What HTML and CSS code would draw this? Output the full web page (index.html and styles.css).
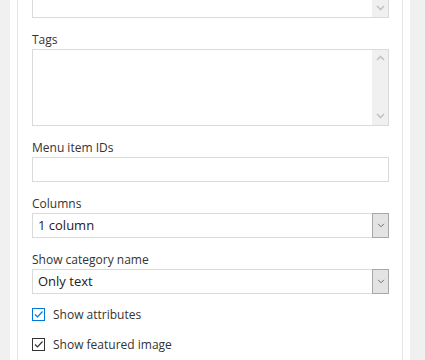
FILE: index.html
```html
<!DOCTYPE html>
<html lang="en">
<head>
    <meta charset="UTF-8">
    <meta name="viewport" content="width=device-width, initial-scale=1.0">
    <title>Widget settings</title>
    <link rel="stylesheet" href="styles.css">
</head>
<body>
    <div class="panel">
        <div class="inner">
            <div class="area area-top">
                <div class="area-text"></div>
                <div class="scrollbar">
                    <svg class="arrow" viewBox="0 0 9 6"><path d="M1 1l3.5 3.5L8 1"/></svg>
                </div>
            </div>

            <div class="field">
                <label class="label">Tags</label>
                <div class="area area-tags">
                    <div class="area-text"></div>
                    <div class="scrollbar">
                        <svg class="arrow" viewBox="0 0 9 6"><path d="M1 5l3.5-3.5L8 5"/></svg>
                        <svg class="arrow" viewBox="0 0 9 6"><path d="M1 1l3.5 3.5L8 1"/></svg>
                    </div>
                </div>
            </div>

            <div class="field">
                <label class="label">Menu item IDs</label>
                <input class="text-input" type="text">
            </div>

            <div class="field">
                <label class="label">Columns</label>
                <div class="select">
                    <span class="select-value">1 column</span>
                    <span class="select-btn"><svg viewBox="0 0 9 6"><path d="M1 1l3.5 3.5L8 1"/></svg></span>
                </div>
            </div>

            <div class="field">
                <label class="label">Show category name</label>
                <div class="select">
                    <span class="select-value">Only text</span>
                    <span class="select-btn"><svg viewBox="0 0 9 6"><path d="M1 1l3.5 3.5L8 1"/></svg></span>
                </div>
            </div>

            <div class="checks">
                <label class="check">
                    <span class="box box-focus"><svg viewBox="0 0 11 11"><path d="M2 5.5l2.5 2.5L9.5 2.5"/></svg></span>
                    Show attributes
                </label>
                <label class="check">
                    <span class="box"><svg viewBox="0 0 11 11"><path d="M2 5.5l2.5 2.5L9.5 2.5"/></svg></span>
                    Show featured image
                </label>
            </div>
        </div>
    </div>
</body>
</html>
```

FILE: styles.css
```css
body {
    font-family: 'Open Sans', 'Noto Sans', sans-serif;
    color: #333;
    background-color: #f0f0f0;
    margin: 0;
    padding: 0;
    overflow: hidden;
}
.panel {
    width: 386px;
    margin-left: 10px;
    padding: 0 7px;
    background-color: #fff;
    height: 360px;
}
.inner {
    display: flow-root;
    border-left: 1px solid #e5e5e5;
    border-right: 1px solid #e5e5e5;
    padding: 0 13px 0 14px;
    height: 100%;
}
.field {
    margin-top: 13px;
}
.label {
    display: block;
    font-size: 12px;
    line-height: 18px;
    height: 18px;
}
.area {
    display: flex;
    border: 1px solid #dadada;
    background-color: #fff;
}
.area-top {
    height: 28px;
    margin-top: -12px;
}
.area-tags {
    height: 75px;
}
.area-text {
    flex: 1;
}
.scrollbar {
    width: 16px;
    background-color: #f0f0f0;
    display: flex;
    flex-direction: column;
    justify-content: space-between;
    align-items: center;
    padding: 5px 0 6px;
}
.area-top .scrollbar {
    justify-content: flex-end;
}
.arrow {
    width: 9px;
    height: 6px;
}
.arrow path {
    fill: none;
    stroke: #c2c2c2;
    stroke-width: 1.6;
}
.text-input {
    display: block;
    box-sizing: border-box;
    width: 100%;
    height: 25px;
    margin: 0;
    border: 1px solid #dadada;
    padding: 0 5px;
    font: inherit;
}
.select {
    display: flex;
    height: 25px;
    box-sizing: border-box;
    border: 1px solid #dadada;
}
.select-value {
    flex: 1;
    font-size: 13px;
    line-height: 23px;
    padding-left: 5px;
    color: #222;
}
.select-btn {
    width: 15px;
    margin: -1px -1px -1px 0;
    border: 1px solid #a8a8a8;
    background-color: #e3e3e3;
    display: flex;
    align-items: center;
    justify-content: center;
}
.select-btn svg {
    width: 8px;
    height: 5px;
}
.select-btn path {
    fill: none;
    stroke: #555;
    stroke-width: 1;
}
.checks {
    margin-top: 14px;
    display: grid;
    gap: 17px;
}
.check {
    display: flex;
    align-items: center;
    gap: 8px;
    font-size: 12px;
    height: 13px;
}
.box {
    width: 11px;
    height: 11px;
    border: 1px solid #333;
    display: flex;
}
.box-focus {
    border-color: #0078d7;
}
.box svg {
    width: 11px;
    height: 11px;
}
.box path {
    fill: none;
    stroke: #333;
    stroke-width: 1.2;
}
.box-focus path {
    stroke: #0078d7;
}
```
